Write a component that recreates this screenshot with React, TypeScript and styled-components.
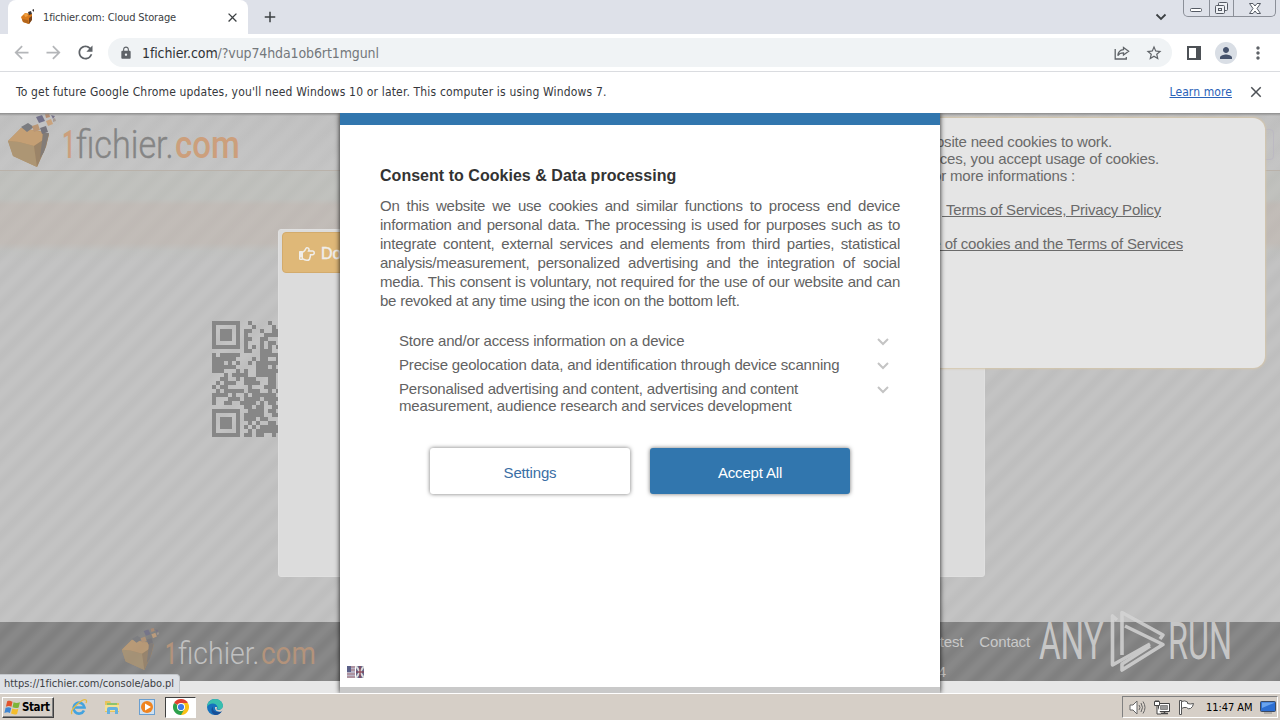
import React from 'react'
import styled, { createGlobalStyle, css } from 'styled-components'
import { MdAdd, MdArrowBack, MdArrowForward, MdClose, MdLock, MdMoreVert, MdPerson, MdRefresh, MdStarBorder } from 'react-icons/md'
import { FaRegHandPointRight } from 'react-icons/fa'

const ui = `'DejaVu Sans Condensed', 'DejaVu Sans', Tahoma, sans-serif`
const arial = `'Liberation Sans', Arial, sans-serif`

const GlobalStyle = createGlobalStyle`
  * { box-sizing: border-box; }
  body { margin: 0; overflow: hidden; }
  svg { display: block; flex: none; }
`

const Desktop = styled.div`
  width: 1280px;
  height: 720px;
  display: flex;
  flex-direction: column;
  overflow: hidden;
  font-family: ${ui};
  background: #fff;
`

/* ---------- browser chrome ---------- */

const TabStrip = styled.div`
  height: 34px;
  flex: none;
  display: flex;
  align-items: flex-start;
  background: #dee1e9;
  padding-left: 8px;
`
const Tab = styled.div`
  width: 240px;
  height: 34px;
  display: flex;
  align-items: center;
  padding: 0 8px 0 12px;
  border-radius: 8px 8px 0 0;
  background: #fff;
`
const TabTitle = styled.span`
  flex: 1;
  margin-left: 7px;
  font-size: 11px;
  letter-spacing: -0.15px;
  color: #3c4043;
  white-space: nowrap;
`
const NewTab = styled.div`
  padding: 8px 0 0 13px;
  color: #3c4043;
`
const TabSearch = styled.div`
  margin: 13px 0 0 auto;
`
const WindowButtons = styled.div`
  display: flex;
  width: 93px;
  height: 17px;
  margin: 0 4px 0 16px;
  border: 1px solid #8b8f98;
  border-top: 0;
  border-radius: 0 0 5px 5px;
`
const WindowButton = styled.div<{ $w: number }>`
  width: ${p => p.$w}px;
  display: flex;
  justify-content: center;
  align-items: center;
  & + & { border-left: 1px solid #8b8f98; }
`
const Toolbar = styled.div`
  height: 38px;
  flex: none;
  display: flex;
  align-items: center;
  padding: 0 12px 0 11px;
  border-bottom: 1px solid #dadce0;
  color: #5f6368;
`
const NavIcon = styled.div<{ $dim?: boolean }>`
  width: 32px;
  color: ${p => (p.$dim ? '#b4b6b9' : '#5f6368')};
`
const Omnibox = styled.div`
  flex: 1;
  height: 29px;
  margin: 0 15px 0 1px;
  padding: 0 9px 0 11px;
  display: flex;
  align-items: center;
  gap: 15px;
  border-radius: 15px;
  background: #f0f3f5;
`
const Url = styled.div`
  flex: 1;
  margin-left: -6px;
  font-size: 14px;
  letter-spacing: -0.11px;
  color: #74787c;
  b { font-weight: 400; color: #303236; }
`
const Avatar = styled.div`
  width: 22px;
  height: 22px;
  margin: 0 11px 0 14px;
  display: flex;
  align-items: center;
  justify-content: center;
  border-radius: 50%;
  background: #d9dee5;
  color: #45526c;
`
const InfoBar = styled.div`
  height: 41px;
  flex: none;
  display: flex;
  align-items: center;
  padding: 0 15px 2px 16px;
  font-size: 12px;
  color: #36383c;
  span { flex: 1; letter-spacing: 0.165px; }
  a { margin-right: 15px; letter-spacing: 0.1px; color: #2a62b8; text-decoration: underline; }
`

/* ---------- page ---------- */

const Viewport = styled.div`
  position: relative;
  height: 580px;
  flex: none;
  overflow: hidden;
  font-family: ${arial};
`
const stripes = (strength: number) => css`
  background-image: repeating-linear-gradient(
    135deg,
    rgba(0, 0, 0, 0) 0 3px,
    rgba(0, 0, 0, ${strength}) 9px 12px,
    rgba(0, 0, 0, 0) 18px
  );
`
const Page = styled.div`
  height: 580px;
  display: flex;
  flex-direction: column;
  background: #c3c3c3;
  ${stripes(0.025)}
`
const SiteHeader = styled.div`
  height: 58px;
  flex: none;
  padding-left: 7px;
  background: linear-gradient(rgba(190, 190, 190, 0.3), rgba(200, 200, 200, 0.4));
  border-bottom: 1px solid #b9b2aa;
`
const Main = styled.div`
  height: 451px;
  flex: none;
  display: flex;
  padding: 58px 0 0 212px;
  background: linear-gradient(rgba(188, 190, 180, 0.35) 28px, rgba(192, 180, 170, 0.45) 34px 72px, rgba(188, 190, 184, 0.25) 80px, transparent 92px);
`
const QrSlot = styled.div`
  width: 66px;
  height: 116px;
  margin-top: 92px;
  overflow: hidden;
`
const Panel = styled.div`
  width: 707px;
  height: 348px;
  padding: 2px 0 0 3px;
  border: 1px solid #e0e0e0;
  border-radius: 3px;
  background: #dcdcdc;
`
const DownloadButton = styled.div`
  width: 300px;
  height: 41px;
  display: flex;
  align-items: center;
  gap: 6px;
  padding: 2px 16px 0;
  border: 1px solid #d3ab6c;
  border-radius: 4px;
  background: #dfb878;
  color: #f0eeea;
  font-size: 16px;
  -webkit-text-stroke: 0.4px #f0eeea;
`
const Footer = styled.div`
  height: 59px;
  flex: none;
  display: flex;
  justify-content: space-between;
  padding: 0 250px 0 120px;
  background-color: #888;
  ${stripes(0.06)}
`
const FooterLinks = styled.div`
  display: flex;
  flex-direction: column;
  align-items: flex-end;
  gap: 13px;
  padding-top: 11px;
  font-size: 15px;
  line-height: 17px;
  letter-spacing: -0.15px;
  color: #c9c9c9;
  div { display: flex; gap: 16px; }
  p { margin: 0 84px 0 0; }
`
const PageEnd = styled.div`
  flex: 1;
  background: #e7e7e7;
`
const TopShade = styled.div`
  position: absolute;
  inset: 0 0 auto;
  height: 3px;
  background: linear-gradient(#8c8c8c, rgba(140, 140, 140, 0));
`
const HeaderButton = styled.div`
  position: absolute;
  top: 16px;
  right: 6px;
  width: 40px;
  height: 31px;
  border: 1px solid #bcb9c2;
  border-radius: 4px;
`
const CookieNotice = styled.div`
  position: absolute;
  top: 5px;
  right: 15px;
  width: 520px;
  height: 250px;
  padding-top: 15px;
  border-radius: 12px;
  background: #e5e5e5;
  box-shadow: 0 0 2px 1px #d6c6aa;
  font-size: 15px;
  line-height: 17px;
  letter-spacing: -0.18px;
  color: #6a6a6a;
`
const NoticeLine = styled.div<{ $end: number; $link?: boolean; $gap?: boolean }>`
  margin: ${p => (p.$gap ? 17 : 0)}px ${p => p.$end}px 0 0;
  text-align: right;
  white-space: nowrap;
  text-decoration: ${p => (p.$link ? 'underline' : 'none')};
`
const Watermark = styled.div`
  position: absolute;
  left: 1036px;
  top: 495px;
`

/* ---------- consent dialog ---------- */

const Backing = styled.div`
  position: absolute;
  left: 340px;
  top: 0;
  width: 600px;
  height: 580px;
  background: #c9c9c9;
  box-shadow: 0 0 5px rgba(0, 0, 0, 0.9);
`
const Dialog = styled.div`
  height: 574px;
  padding: 41px 40px 0;
  border-top: 12px solid #3176ae;
  background: #fff;
  color: #626262;
  font-size: 15px;
  display: flex;
  flex-direction: column;
`
const DialogTitle = styled.h1`
  margin: 0;
  font-size: 16px;
  line-height: 20px;
  letter-spacing: 0.03px;
  color: #333;
`
const Description = styled.p`
  margin: 10px 0 0;
  line-height: 19px;
  letter-spacing: -0.23px;
  span {
    display: block;
    white-space: nowrap;
    text-align: justify;
    text-align-last: justify;
  }
  span:last-child { text-align-last: left; }
`
const Purposes = styled.ul`
  margin: 22px 11px 0 19px;
  padding: 0;
  list-style: none;
  display: flex;
  flex-direction: column;
  gap: 7px;
  line-height: 17px;
  letter-spacing: -0.17px;
`
const Purpose = styled.li`
  display: flex;
  justify-content: space-between;
  span { white-space: pre; }
  svg { margin-top: 6px; }
`
const Actions = styled.div`
  display: flex;
  justify-content: center;
  gap: 20px;
  margin-top: 34px;
`
const Action = styled.button<{ $primary?: boolean }>`
  width: 200px;
  height: 46px;
  padding: 3px 0 0;
  border: 0;
  border-radius: 3px;
  font: 15px ${arial};
  letter-spacing: -0.17px;
  background: ${p => (p.$primary ? '#3176ae' : '#fff')};
  color: ${p => (p.$primary ? '#fff' : '#3a6ea5')};
  box-shadow: 0 0 4px rgba(0, 0, 0, 0.55);
`
const Language = styled.div`
  margin: auto 0 9px -33px;
`
const StatusBubble = styled.div`
  position: absolute;
  left: 0;
  bottom: 0;
  width: 180px;
  height: 19px;
  padding-left: 4px;
  border: 1px solid #c3c6ca;
  border-width: 1px 1px 0 0;
  border-radius: 0 4px 0 0;
  background: #dee1e6;
  font: 11px/17px ${ui};
  letter-spacing: -0.02px;
  color: #3c4043;
  white-space: nowrap;
`

/* ---------- taskbar ---------- */

const Taskbar = styled.div`
  height: 27px;
  flex: none;
  display: flex;
  align-items: center;
  padding: 0 2px;
  border-top: 1px solid #fff;
  background: #d6cfc7;
`
const StartButton = styled.div`
  width: 52px;
  height: 21px;
  display: flex;
  align-items: center;
  gap: 1px;
  padding-left: 1px;
  border: 1px solid;
  border-color: #fff #404040 #404040 #fff;
  box-shadow: inset -1px -1px #808080;
  font-size: 11.5px;
  font-weight: 700;
  letter-spacing: -0.4px;
  color: #000;
`
const QuickLaunch = styled.div`
  display: flex;
  align-items: center;
  margin-left: 9px;
`
const Launcher = styled.div<{ $active?: boolean }>`
  width: 31px;
  height: 21px;
  margin-right: 3px;
  display: flex;
  align-items: center;
  justify-content: center;
  ${p =>
    p.$active &&
    css`
      border: 1px solid;
      border-color: #404040 #fff #fff #404040;
      background: #fff;
    `}
`
const Tray = styled.div`
  width: 156px;
  height: 22px;
  margin-left: auto;
  display: flex;
  align-items: center;
  padding: 0 1px 0 6px;
  border: 1px solid;
  border-color: #808080 #fff #fff #808080;
  font-size: 11px;
  color: #000;
  svg:not(:last-child) { margin-right: 8px; }
  span { flex: 1; margin-left: 3px; letter-spacing: -0.05px; white-space: nowrap; }
`

/* ---------- drawings ---------- */

const Cube = () => (
  <>
    <path d="M1 28 L14 15 L33 18 L42 21 L39 33 L30 54 L6 43 Z" fill="#b5926a" />
    <path d="M1 28 L14 15 L35 19 L36 27 L27 33 L12 29 Z" fill="#c49f74" />
    <path d="M1 28 L12 29 L27 33 L30 54 L6 43 Z" fill="#ad9674" />
    <path d="M27 33 L36 27 L42 21 L39 34 L30 54 Z" fill="#9b8468" />
    <path d="M36 20 L42 20 L37 39 L33 45 Z" fill="#827c78" />
    <path d="M14 14 L21 10 L27 14 L20 19 Z" fill="#7b7c80" />
    <path d="M25 13 L31 11 L33 17 L27 19 Z" fill="#ba9675" />
    <path d="M33 15 L39 13 L41 19 L35 21 Z" fill="#77757c" />
    <path d="M29 4 L35 2 L38 8 L32 10 Z" fill="#72718a" />
    <path d="M39 8 L44 6 L46 11 L41 13 Z" fill="#c9a27c" />
    <path d="M38 1 L42 0 L43 4 L39 5 Z" fill="#b48c70" />
    <path d="M44 2 L48 3 L46 6 Z" fill="#77738a" />
    <path d="M46 6 L48 5 L49 8 L46 9 Z" fill="#a59a94" />
  </>
)

const SiteLogo = ({ ink, accent }: { ink: string; accent: string }) => (
  <svg width="250" height="58" viewBox="0 0 250 58" fontFamily="Roboto, sans-serif" fontSize="38">
    <Cube />
    <text transform="translate(55 45) scale(.62 1)" fill={accent} fontWeight="500">1</text>
    <text transform="translate(69 45) scale(.9 1)" fill={ink} stroke={ink} strokeWidth=".4" fontWeight="300">fichier.</text>
    <text transform="translate(168 45) scale(.87 1)" fill={accent} fontWeight="500">com</text>
  </svg>
)

const FooterLogo = () => (
  <svg width="210" height="59" viewBox="0 0 210 59" fontFamily="Roboto, sans-serif" fontSize="32">
    <g transform="translate(1 6) scale(.78)" opacity=".8"><Cube /></g>
    <text transform="translate(45 42) scale(.64 1)" fill="#b3937b" fontWeight="500">1</text>
    <text transform="translate(58 42) scale(.89 1)" fill="#c0c0c0" fontWeight="300">fichier.</text>
    <text transform="translate(141 42) scale(.87 1)" fill="#b3937b" fontWeight="400">com</text>
  </svg>
)

const QR_ROWS = [
  '11111110010000100',
  '10000010001000010',
  '10111010110010011',
  '10111010100001111',
  '10111010110011000',
  '10000010100010110',
  '11111110101010101',
  '00000000110011100',
  '10111110000011111',
  '11111100001011001',
  '11101010010111111',
  '11111100000111010',
  '11100010100111111',
  '00010111100111110',
  '00110010111000110',
  '01011100111100110',
  '10110000010001110',
  '01011111011100101',
  '11110100101111110',
  '10001110111101111',
  '10011001111010110',
  '00000000110110011',
  '11111110011110110',
  '10000010111110011',
  '10111010111011000',
  '10111010010100110',
  '10111010101011111',
  '10000010010111111',
  '11111110110110010',
]

const Qr = () => (
  <svg width="68" height="116" shapeRendering="crispEdges" fill="#878787">
    {QR_ROWS.map((row, y) =>
      row.split('').map((c, x) => (c === '1' ? <rect key={`${x}-${y}`} x={x * 4} y={y * 4} width="4" height="4" /> : null))
    )}
  </svg>
)

const AnyRun = () => (
  <svg width="210" height="66" viewBox="0 0 210 66" fill="#d2d2d2" fontFamily="Roboto, sans-serif" fontSize="51" opacity=".85">
    <text transform="translate(3 51) scale(.65 1)">ANY</text>
    <text transform="translate(132 51) scale(.635 1)">RUN</text>
    <g fill="none" stroke="#d4d4d4" strokeWidth="3.6" strokeLinejoin="round">
      <path d="M81 12 L76.500 8 L76.500 57 L114 36" />
      <path d="M86 47 L86 4.500 L127 27 L124 31" />
      <path d="M89 18 L127 36.500 L86 62 L86 56 L114 38" />
    </g>
  </svg>
)

const Chevron = () => (
  <svg width="12" height="8" fill="none" stroke="#c4c4c4" strokeWidth="2">
    <path d="M1 1 L6 6 L11 1" />
  </svg>
)

const Favicon = () => (
  <svg width="16" height="16" viewBox="0 0 16 16">
    <path d="M1 8 L5 4 L12 5 L12 10 L9 15 L3 13 Z" fill="#d87a1c" />
    <path d="M2 10 L8 11 L9 15 L3 13 Z" fill="#b4661c" />
    <path d="M9 9 L12 7 L12 11 L9 15 Z" fill="#7a451c" />
    <path d="M8 3 L11 2 L12 5 L9 6 Z M12 1 L14 0 L14 3 Z" fill="#3a3434" />
    <path d="M4 5 L7 4 L8 7 L5 8 Z" fill="#f0a040" />
  </svg>
)

const Share = () => (
  <svg width="16" height="16" viewBox="0 0 16 16" fill="none" stroke="#5f6368" strokeWidth="1.3">
    <path d="M1.2 4 V14 H12.3 V12" />
    <path d="M9.5 2.5 L14.6 6.3 L9.5 10 V7.8 C7 7.8 5 8.6 3.8 10.6 C4.2 7 6.3 5 9.5 4.7 Z" />
  </svg>
)

const WindowsFlag = () => (
  <svg width="17" height="17" viewBox="0 0 16 16">
    <path d="M3 2 C5 1 7 2 8 2.6 L7 7.4 C5.500 6.500 4 6.300 1.800 7.200 Z" fill="#e2532b" />
    <path d="M9 3 C11 4 13 3.800 15 3 L13.800 8 C12 8.800 10 8.600 8 7.800 Z" fill="#7db53a" />
    <path d="M1.500 8.300 C3.500 7.400 5.500 7.600 6.800 8.500 L5.600 13.200 C4 12.300 2.200 12.400 .4 13.200 Z" fill="#3f86d2" />
    <path d="M7.800 9 C9.500 9.900 11.500 9.900 13.500 9.200 L12.300 14 C10.500 14.800 8.500 14.500 6.600 13.700 Z" fill="#f4bd2c" />
  </svg>
)

const Explorer = () => (
  <svg width="18" height="18" viewBox="0 0 18 18" fill="none">
    <path d="M14 12.500 A5.500 5.500 0 1 1 14.500 9.500 H5" stroke="#43a3df" strokeWidth="2.600" />
    <path d="M2 16 C-1 12 13 0 16 2 C17 2.700 16.500 4 16 5" stroke="#e5bb42" strokeWidth="1.300" />
  </svg>
)

const Folder = () => (
  <svg width="17" height="16" viewBox="0 0 17 16">
    <path d="M1 2 H6 L7 4 H15 V13 H1 Z" fill="#e8c45c" />
    <path d="M3 4 H13 V8 H3 Z" fill="#8dc36d" />
    <path d="M1 6 H15 V12 H1 Z" fill="#f5e193" />
    <path d="M3 15 V10 Q3 8 5 8 H12 Q14 8 14 10 V15 H11 V11 H6 V15 Z" fill="#66b1df" />
  </svg>
)

const MediaPlayer = () => (
  <svg width="16" height="16" viewBox="0 0 16 16">
    <rect x=".5" y=".5" width="15" height="15" fill="#cfe1f1" stroke="#6a9fd0" />
    <circle cx="8" cy="8" r="6" fill="#ef8420" />
    <path d="M6 4.500 L12 8 L6 11.500 Z" fill="#fff" />
  </svg>
)

const ChromeLogo = () => (
  <svg width="16" height="16" viewBox="0 0 16 16">
    <path d="M8 8 L1.070 4 A8 8 0 0 1 14.930 4 Z" fill="#e0402f" />
    <path d="M8 8 L14.930 4 A8 8 0 0 1 8 16 Z" fill="#fbc116" />
    <path d="M8 8 L8 16 A8 8 0 0 1 1.070 4 Z" fill="#2da14c" />
    <path d="M8 4 H14.930 L11.500 10 Z" fill="#fbc116" />
    <path d="M4.500 10 L8 16 L11.500 10 Z" fill="#2da14c" />
    <circle cx="8" cy="8" r="4" fill="#fff" />
    <circle cx="8" cy="8" r="3.100" fill="#3d7be8" />
  </svg>
)

const EdgeLogo = () => (
  <svg width="16" height="16" viewBox="0 0 16 16">
    <circle cx="8" cy="8" r="8" fill="#1672bd" />
    <path d="M0 8 C.2 3 4 0 8 0 C13 0 16 3.500 16 7 C16 10 13 11 10 10.300 C12 8 9 4.500 6 4.500 C3 4.500 1 6 0 8 Z" fill="#38bfae" />
    <path d="M6 7.500 C5 11 8 14 13 12.800 C14 12.600 15 12 15 12 C14 14 11.500 16 8.500 16 C4 15 3.500 9.500 6 7.500 Z" fill="#174f97" />
    <path d="M10 8 C10 9 9.500 9.500 9.800 10.400 C11.500 11.500 15.500 10.800 16 7.500 L16 11 L14.500 12.500 C10 13.500 7.500 11 8 8 Z" fill="#d6cfc7" />
  </svg>
)

const Speaker = () => (
  <svg width="17" height="15" viewBox="0 0 17 15" fill="none" stroke="#666">
    <path d="M1 5 H4 L8 1 V14 L4 10 H1 Z" fill="#fff" />
    <path d="M10 5 Q12 7.500 10 10 M12 3 Q15 7.500 12 12 M14 1.500 Q18 7.500 14 13.500" />
  </svg>
)

const Network = () => (
  <svg width="16" height="15" viewBox="0 0 16 15" fill="none" stroke="#444">
    <path d="M4.500 3.500 H15.500 V11.500 H4.500 Z" fill="#fff" />
    <path d="M6.500 5.500 H13.500 V9.500 H6.500 Z" fill="#999" stroke="#888" />
    <path d="M7 13.500 H14 M10.500 11 V13.500" strokeWidth="1.500" />
    <path d="M.5 1.500 H5.500 V5.500 H.5 Z M2 0 V2 M4 0 V2 M3 6 V14 H7" fill="#fff" />
  </svg>
)

const ActionFlag = () => (
  <svg width="17" height="15" viewBox="0 0 17 15" fill="#fff" stroke="#555">
    <path d="M1.500 .5 H3.500 V14.500 H1.500 Z" />
    <path d="M3.500 1.500 Q7 0 9.500 2 V3.500 Q12 4.500 15.500 3.500 Q15 7 12.500 8.500 Q10 9.500 8.500 7.500 Q6 7 3.500 8.500 Z" />
  </svg>
)

const ShowDesktop = () => (
  <svg width="16" height="14" viewBox="0 0 16 14">
    <rect x=".5" y="1.500" width="15" height="10" rx="1" fill="#2d6fd2" stroke="#3d4a60" />
    <path d="M2 8 L14 3 V2.500 H2 Z" fill="#6aa4ee" />
    <path d="M4 13 H12" stroke="#8a8a8a" />
  </svg>
)

const LanguageIcon = () => (
  <svg width="17" height="12" viewBox="0 0 17 12">
    <rect width="8" height="12" fill="#b9b4c6" />
    <rect width="4" height="6" fill="#5b6088" />
    <path d="M4 1 H8 M4 4 H8 M0 8 H8 M0 11 H8" stroke="#a3727a" strokeWidth="1" />
    <rect x="9" width="8" height="12" fill="#666b8f" />
    <path d="M9 0 L17 12 M17 0 L9 12" stroke="#ddd" strokeWidth="2" />
    <path d="M9 6 H17 M13 0 V12" stroke="#8c3b48" strokeWidth="1.200" />
  </svg>
)

const description = [
  'On this website we use cookies and similar functions to process end device',
  'information and personal data. The processing is used for purposes such as to',
  'integrate content, external services and elements from third parties, statistical',
  'analysis/measurement, personalized advertising and the integration of social',
  'media. This consent is voluntary, not required for the use of our website and can',
  'be revoked at any time using the icon on the bottom left.',
]

const purposes = [
  'Store and/or access information on a device',
  'Precise geolocation data, and identification through device scanning',
  'Personalised advertising and content, advertising and content\nmeasurement, audience research and services development',
]

const BrowserChrome = () => (
  <>
    <TabStrip>
      <Tab>
        <Favicon />
        <TabTitle>1fichier.com: Cloud Storage</TabTitle>
        <MdClose size={15} color="#3c4043" />
      </Tab>
      <NewTab><MdAdd size={18} /></NewTab>
      <TabSearch>
        <svg width="12" height="8" fill="none" stroke="#3c4043" strokeWidth="1.800"><path d="M1.500 1.500 L6 6 L10.500 1.500" /></svg>
      </TabSearch>
      <WindowButtons>
        <WindowButton $w={25}>
          <svg width="12" height="16" fill="#fff" stroke="#555a64"><rect x=".5" y="8.500" width="11" height="3" rx="1" /></svg>
        </WindowButton>
        <WindowButton $w={25}>
          <svg width="13" height="13" fill="#eef0f4" stroke="#555a64">
            <rect x="3.500" y=".5" width="9" height="8" rx="1" />
            <rect x=".5" y="3.500" width="9" height="8" rx="1" />
            <rect x="3.500" y="6.500" width="3" height="2" />
          </svg>
        </WindowButton>
        <WindowButton $w={42}>
          <svg width="12" height="11" fill="#fff" stroke="#555a64">
            <path d="M.5 .5 H4 L6 3 L8 .5 H11.500 L8 5.500 L11.500 10.500 H8 L6 8 L4 10.500 H.5 L4 5.500 Z" />
          </svg>
        </WindowButton>
      </WindowButtons>
    </TabStrip>
    <Toolbar>
      <NavIcon $dim><MdArrowBack size={21} /></NavIcon>
      <NavIcon $dim><MdArrowForward size={21} /></NavIcon>
      <NavIcon><MdRefresh size={21} /></NavIcon>
      <Omnibox>
        <MdLock size={14} />
        <Url><b>1fichier.com</b>/?vup74hda1ob6rt1mgunl</Url>
        <Share />
        <MdStarBorder size={18} />
      </Omnibox>
      <svg width="14" height="14"><path d="M1 1 H13 V13 H1 Z" fill="none" stroke="#4d5156" strokeWidth="2" /><path d="M9 1 H14 V13 H9 Z" fill="#4d5156" /></svg>
      <Avatar><MdPerson size={18} /></Avatar>
      <MdMoreVert size={20} />
    </Toolbar>
    <InfoBar>
      <span>To get future Google Chrome updates, you'll need Windows 10 or later. This computer is using Windows 7.</span>
      <a>Learn more</a>
      <MdClose size={18} color="#4d5156" />
    </InfoBar>
  </>
)

const ConsentDialog = () => (
  <Backing>
    <Dialog>
      <DialogTitle>Consent to Cookies &amp; Data processing</DialogTitle>
      <Description>
        {description.map(line => <span key={line}>{line}</span>)}
      </Description>
      <Purposes>
        {purposes.map(p => (
          <Purpose key={p}>
            <span>{p}</span>
            <Chevron />
          </Purpose>
        ))}
      </Purposes>
      <Actions>
        <Action>Settings</Action>
        <Action $primary>Accept All</Action>
      </Actions>
      <Language><LanguageIcon /></Language>
    </Dialog>
  </Backing>
)

export default function App() {
  return (
    <Desktop>
      <GlobalStyle />
      <BrowserChrome />
      <Viewport>
        <Page>
          <SiteHeader><SiteLogo ink="#858585" accent="#cc9f7c" /></SiteHeader>
          <Main>
            <QrSlot><Qr /></QrSlot>
            <Panel>
              <DownloadButton><FaRegHandPointRight size={16} /> Download</DownloadButton>
            </Panel>
          </Main>
          <Footer>
            <FooterLogo />
            <FooterLinks>
              <div><span>Speedtest</span><span>Contact</span></div>
              <p>4</p>
            </FooterLinks>
          </Footer>
          <PageEnd />
        </Page>
        <HeaderButton />
        <TopShade />
        <CookieNotice>
          <NoticeLine $end={153}>Our website need cookies to work.</NoticeLine>
          <NoticeLine $end={106}>By using our services, you accept usage of cookies.</NoticeLine>
          <NoticeLine $end={190}>For more informations :</NoticeLine>
          <NoticeLine $end={104} $link $gap>&nbsp;Terms of Services, Privacy Policy</NoticeLine>
          <NoticeLine $end={82} $link $gap>Usage of cookies and the Terms of Services</NoticeLine>
        </CookieNotice>
        <Watermark><AnyRun /></Watermark>
        <ConsentDialog />
        <StatusBubble>https://1fichier.com/console/abo.pl</StatusBubble>
      </Viewport>
      <Taskbar>
        <StartButton><WindowsFlag />Start</StartButton>
        <QuickLaunch>
          <Launcher><Explorer /></Launcher>
          <Launcher><Folder /></Launcher>
          <Launcher><MediaPlayer /></Launcher>
          <Launcher $active><ChromeLogo /></Launcher>
          <Launcher><EdgeLogo /></Launcher>
        </QuickLaunch>
        <Tray>
          <Speaker />
          <Network />
          <ActionFlag />
          <span>11:47 AM</span>
          <ShowDesktop />
        </Tray>
      </Taskbar>
    </Desktop>
  )
}
